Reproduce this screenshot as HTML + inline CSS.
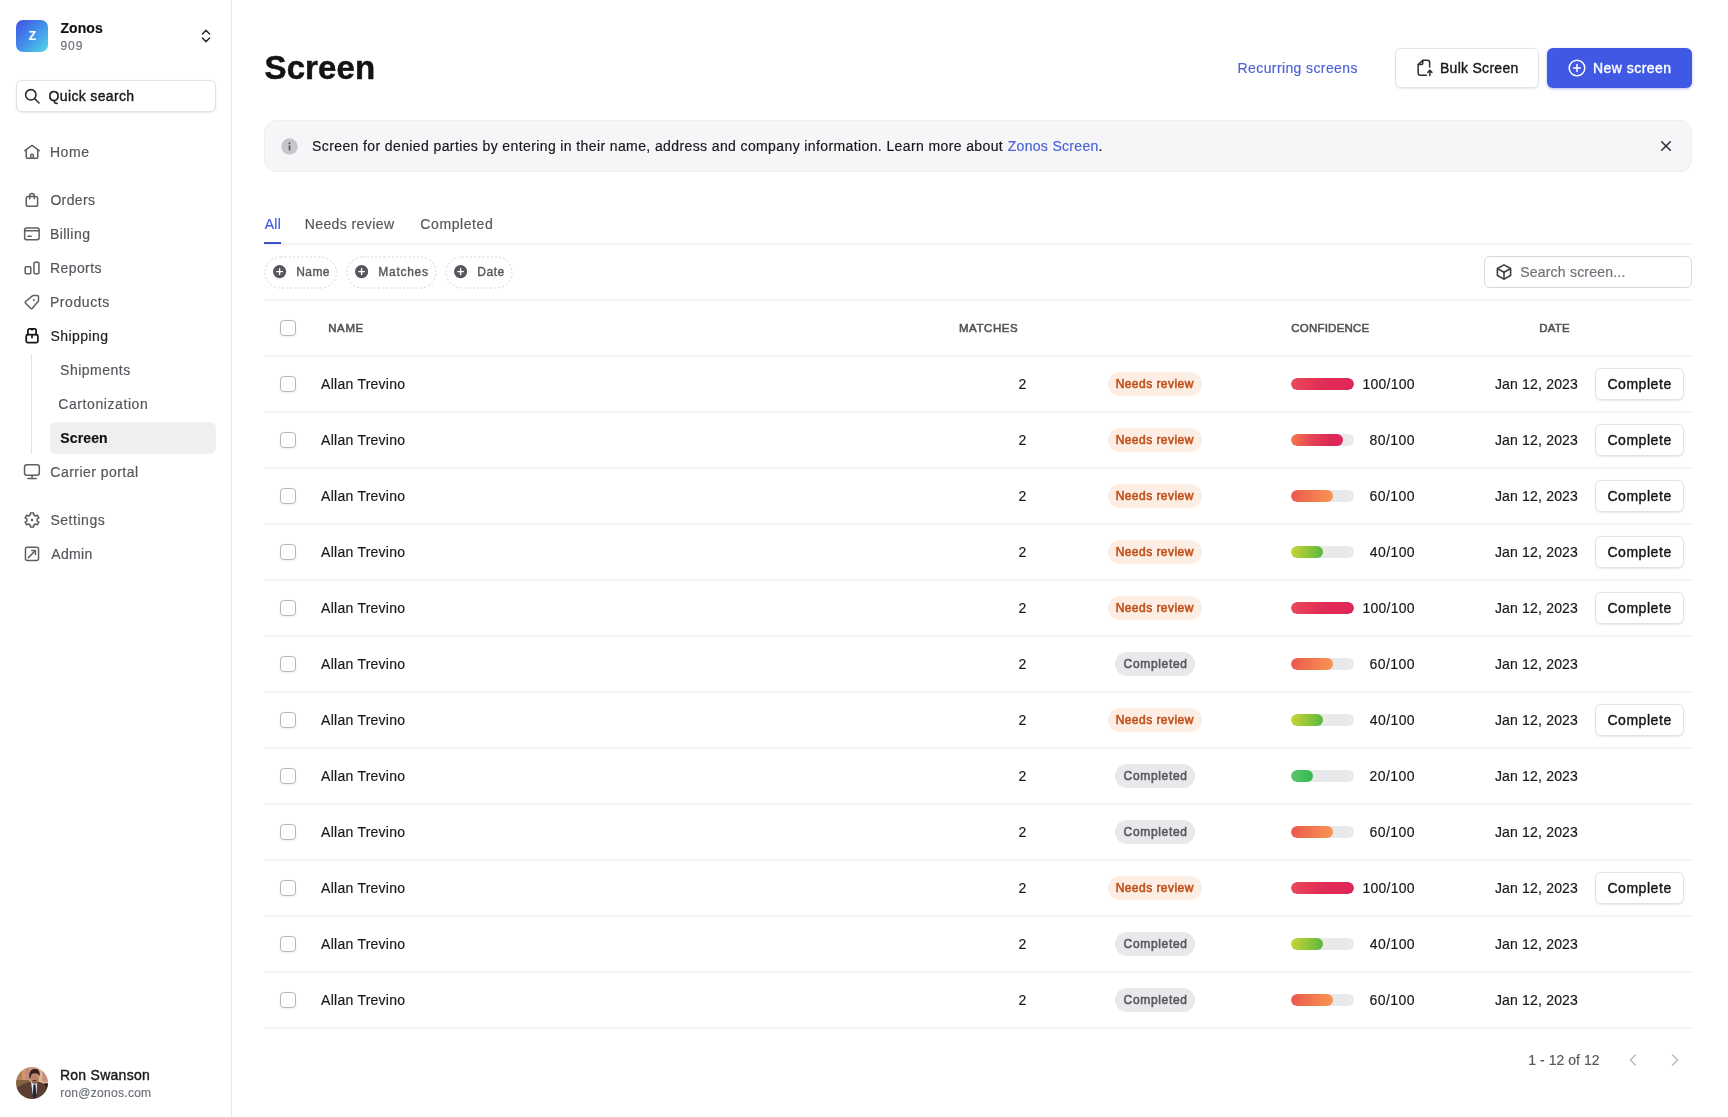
<!DOCTYPE html>
<html lang="en"><head><meta charset="utf-8"><title>Screen</title>
<style>
html,body{margin:0;padding:0;background:#fff}
body{width:1728px;height:1117px;position:relative;overflow:hidden;font-family:"Liberation Sans",sans-serif}
.a{position:absolute;box-sizing:border-box}
.t{position:absolute;white-space:pre;line-height:20px;-webkit-text-stroke:.18px currentColor}
#root{position:absolute;left:0;top:0;width:1728px;height:1117px;will-change:transform}
.m{-webkit-text-stroke:.38px currentColor}
.sb{-webkit-text-stroke:.55px currentColor}
.cb{width:16px;height:16px;border:1.5px solid #b4b6bb;border-radius:4px;background:#fff;box-shadow:0 1px 2px rgba(0,0,0,.08)}
.hl{height:2px;background:#f3f3f5;left:264px;width:1428px}
.btn{background:#fff;border:1px solid #e3e3e6;border-radius:6px;box-shadow:0 1px 2px rgba(0,0,0,.09)}
.badge{height:24px;border-radius:12px}
.track{height:12px;width:63px;border-radius:6px;background:#e9e9ec;overflow:hidden}
.fill{height:12px;border-radius:6px}
.chip{height:32px;border:1px dashed #d6d6da;border-radius:16px}
</style></head><body><div id="root">

<div class="a" style="left:231px;top:0;width:1px;height:1117px;background:#e8e8eb"></div>
<div class="a" style="left:16px;top:20px;width:32px;height:32px;border-radius:7px;background:linear-gradient(135deg,#4250e2 0%,#4190ea 50%,#55d8e8 100%)"></div>
<span class="t" style="left:28.68px;top:25.60px;font-size:12px;font-weight:700;color:#fff;letter-spacing:0.000px">Z</span>
<span class="t" style="left:60.52px;top:18.20px;font-size:14px;font-weight:700;color:#111;letter-spacing:0.053px">Zonos</span>
<span class="t" style="left:60.38px;top:35.80px;font-size:12px;font-weight:400;color:#6d7178;letter-spacing:1.010px">909</span>
<svg class="a" style="color:#2b2d31;overflow:visible;left:198px;top:28px" width="16" height="16" viewBox="0 0 16 16" fill="none" stroke="#2b2d31" stroke-width="1.5" stroke-linecap="round" stroke-linejoin="round" ><path d="M4.400 6 8 2.400 11.600 6"/><path d="M4.400 10 8 13.600 11.600 10"/></svg>
<div class="a btn" style="left:16px;top:80px;width:200px;height:32px;border-radius:6px"></div>
<svg class="a" style="color:#2b2d31;overflow:visible;left:24px;top:88px" width="16" height="16" viewBox="0 0 16 16" fill="none" stroke="#2b2d31" stroke-width="1.6" stroke-linecap="round" stroke-linejoin="round" ><circle cx="6.800" cy="6.800" r="5.200"/><path d="M10.800 10.800 15 15"/></svg>
<span class="t m" style="left:48.58px;top:86.00px;font-size:14px;font-weight:400;color:#17181b;letter-spacing:0.344px">Quick search</span>
<svg class="a" style="color:#5c5f64;overflow:visible;left:24px;top:144px" width="16" height="16" viewBox="0 0 16 16" fill="none" stroke="#5c5f64" stroke-width="1.5" stroke-linecap="round" stroke-linejoin="round" ><path d="M0.900 6.700 8.050 1.450 15.200 6.700"/><path d="M2.250 5.900v7c0 .800.650 1.450 1.450 1.450h8.600c.800 0 1.450-.650 1.450-1.450v-7"/><path d="M6.750 14.300v-3.100c0-.500.400-.900.900-.900h.750c.500 0 .900.400.900.900v3.100"/></svg>
<span class="t" style="left:49.89px;top:142.00px;font-size:14px;font-weight:400;color:#53565b;letter-spacing:0.610px">Home</span>
<svg class="a" style="color:#5c5f64;overflow:visible;left:24px;top:192px" width="16" height="16" viewBox="0 0 16 16" fill="none" stroke="#5c5f64" stroke-width="1.5" stroke-linecap="round" stroke-linejoin="round" ><rect x="2.250" y="4.550" width="11.350" height="9.750" rx="1.900"/><path d="M5.650 6.700V3.800c0-1.300 1-2.300 2.300-2.300s2.350 1 2.350 2.300v2.900"/></svg>
<span class="t" style="left:50.38px;top:190.00px;font-size:14px;font-weight:400;color:#53565b;letter-spacing:0.358px">Orders</span>
<svg class="a" style="color:#5c5f64;overflow:visible;left:24px;top:226px" width="16" height="16" viewBox="0 0 16 16" fill="none" stroke="#5c5f64" stroke-width="1.5" stroke-linecap="round" stroke-linejoin="round" ><rect x=".650" y="2.050" width="14.500" height="11.700" rx="1.900"/><path d="M.650 4.800h14.500"/><path d="M3.900 10.300h3.300"/></svg>
<span class="t" style="left:49.89px;top:224.00px;font-size:14px;font-weight:400;color:#53565b;letter-spacing:0.452px">Billing</span>
<svg class="a" style="color:#5c5f64;overflow:visible;left:24px;top:260px" width="16" height="16" viewBox="0 0 16 16" fill="none" stroke="#5c5f64" stroke-width="1.5" stroke-linecap="round" stroke-linejoin="round" ><rect x="1.150" y="6.750" width="5.600" height="6.900" rx="1.100"/><rect x="9.950" y="2.250" width="5" height="11.400" rx="1.100"/></svg>
<span class="t" style="left:49.89px;top:258.00px;font-size:14px;font-weight:400;color:#53565b;letter-spacing:0.441px">Reports</span>
<svg class="a" style="color:#5c5f64;overflow:visible;left:24px;top:294px" width="16" height="16" viewBox="0 0 16 16" fill="none" stroke="#5c5f64" stroke-width="1.5" stroke-linecap="round" stroke-linejoin="round" ><path d="M9.800 1.400H13.100Q14.500 1.400 14.500 2.800V6.300Q14.500 7 14 7.600L8.400 14.300Q7.500 15.200 6.600 14.300L1.600 9.300Q.700 8.400 1.600 7.500L8.400 1.900Q9 1.400 9.800 1.400Z"/><circle cx="9.900" cy="6" r="1" fill="currentColor" stroke="none"/></svg>
<span class="t" style="left:49.89px;top:292.00px;font-size:14px;font-weight:400;color:#53565b;letter-spacing:0.589px">Products</span>
<svg class="a" style="color:#17181b;overflow:visible;left:24px;top:328px" width="16" height="16" viewBox="0 0 16 16" fill="none" stroke="#17181b" stroke-width="1.75" stroke-linecap="round" stroke-linejoin="round" ><rect x="2.200" y="6.700" width="11.700" height="7.900" rx="1.500"/><path d="M3.900 6.700V2.300c0-.800.600-1.400 1.400-1.400h5.400c.800 0 1.400.600 1.400 1.400v4.400"/><path d="M8 6.900v2.600"/><path d="M7.200 1.300 8 2.500l.800-1.200Z" fill="currentColor" stroke-width="1"/></svg>
<span class="t" style="left:50.40px;top:326.00px;font-size:14px;font-weight:400;color:#1d1e22;letter-spacing:0.437px">Shipping</span>
<svg class="a" style="color:#5c5f64;overflow:visible;left:24px;top:464px" width="16" height="16" viewBox="0 0 16 16" fill="none" stroke="#5c5f64" stroke-width="1.5" stroke-linecap="round" stroke-linejoin="round" ><rect x=".550" y=".850" width="14.750" height="10.300" rx="2.200"/><path d="M8.040 11.300v3.200"/><path d="M3.900 14.550h8.200"/></svg>
<span class="t" style="left:50.33px;top:462.00px;font-size:14px;font-weight:400;color:#53565b;letter-spacing:0.466px">Carrier portal</span>
<svg class="a" style="color:#5c5f64;overflow:visible;left:24px;top:512px" width="16" height="16" viewBox="0 0 16 16" fill="none" stroke="#5c5f64" stroke-width="1.5" stroke-linecap="round" stroke-linejoin="round" ><path d="M6.27 2.99 L6.32 1.00 L9.68 1.00 L9.73 2.99 L11.48 4.00 L13.22 3.04 L14.90 5.96 L13.20 6.99 L13.20 9.01 L14.90 10.04 L13.22 12.96 L11.48 12.00 L9.73 13.01 L9.68 15.00 L6.32 15.00 L6.27 13.01 L4.52 12.00 L2.78 12.96 L1.10 10.04 L2.80 9.01 L2.80 6.99 L1.10 5.96 L2.78 3.04 L4.52 4.00Z"/><circle cx="8" cy="8" r="1.250" fill="currentColor" stroke="none"/></svg>
<span class="t" style="left:50.40px;top:510.00px;font-size:14px;font-weight:400;color:#53565b;letter-spacing:0.538px">Settings</span>
<svg class="a" style="color:#5c5f64;overflow:visible;left:24px;top:546px" width="16" height="16" viewBox="0 0 16 16" fill="none" stroke="#5c5f64" stroke-width="1.5" stroke-linecap="round" stroke-linejoin="round" ><rect x="1.450" y="1.200" width="13.100" height="13.400" rx="2"/><path d="M4.400 11.600l6.800-6.800"/><path d="M7.800 4.600h3.600v3.900"/></svg>
<span class="t" style="left:51.31px;top:544.00px;font-size:14px;font-weight:400;color:#53565b;letter-spacing:0.317px">Admin</span>
<div class="a" style="left:31px;top:354px;width:1px;height:100px;background:#e4e4e7"></div>
<div class="a" style="left:50px;top:422px;width:166px;height:32px;border-radius:6px;background:#efeff0"></div>
<span class="t" style="left:60.10px;top:360.00px;font-size:14px;font-weight:400;color:#53565b;letter-spacing:0.488px">Shipments</span>
<span class="t" style="left:58.23px;top:394.00px;font-size:14px;font-weight:400;color:#53565b;letter-spacing:0.587px">Cartonization</span>
<span class="t" style="left:60.34px;top:428.00px;font-size:14px;font-weight:700;color:#111;letter-spacing:0.118px">Screen</span>
<svg class="a" style="left:16px;top:1067px" width="32" height="32" viewBox="0 0 32 32"><defs><clipPath id="av"><circle cx="16" cy="16" r="16"/></clipPath><filter id="bl" x="-10%" y="-10%" width="120%" height="120%"><feGaussianBlur stdDeviation=".55"/></filter></defs>
<g clip-path="url(#av)"><g filter="url(#bl)"><rect x="-2" y="-2" width="36" height="36" fill="#c89c7c"/><rect x="-2" y="-2" width="8" height="36" fill="#b47f5c"/><rect x="6" y="-2" width="3.500" height="20" fill="#d19a62"/><rect x="9.500" y="-2" width="4" height="20" fill="#c48a82"/><rect x="23" y="-2" width="3.500" height="20" fill="#dcb692"/><rect x="26.500" y="-2" width="7" height="20" fill="#c88c80"/>
<path d="M-2 13h15v8l-15 3Z" fill="#86643f"/><rect x="24" y="14.800" width="9" height="1.600" fill="#dcbc92"/><rect x="28" y="16.400" width="5" height="10" fill="#2e1e18"/>
<path d="M-2 23C3 18.500 9 16.500 14 14.800l9.500.200c3.500 1 5.500 2.500 6.500 5l3 14H-2Z" fill="#5c3e30"/>
<path d="M15 14.500h6.200L20.600 27h-4Z" fill="#e9e6ea"/><path d="M17.400 17.600h2.100l1 11.500-1.900 2.500-1.900-2.500Z" fill="#1b2940"/>
<ellipse cx="18.700" cy="11.300" rx="3.900" ry="5.400" fill="#b9846a"/>
<path d="M13.600 11.500c-1.200-6 1.400-9.800 5.200-9.800 3.600 0 5.600 2.800 4.900 7.600-.900-2.200-2.400-3.100-4.900-3.100-2.600 0-3.700 1.200-3.900 3.400-.100 1.200-.400 1.900-1.300 1.900Z" fill="#38231a"/>
<path d="M16.300 13.600c1.400-.900 3.200-.900 4.500 0l-.200 1c-1.300-.400-2.800-.400-4.100 0Z" fill="#452c20"/><path d="M15.300 13.500c.600 2.300 1.800 3.300 3.400 3.300s2.800-1 3.400-3.300c-.800 1.500-1.900 2.100-3.400 2.100s-2.600-.600-3.400-2.100Z" fill="#6b4a3a"/></g></g></svg>
<span class="t m" style="left:59.89px;top:1065.00px;font-size:14px;font-weight:400;color:#17181b;letter-spacing:0.271px">Ron Swanson</span>
<span class="t" style="left:60.14px;top:1082.80px;font-size:12px;font-weight:400;color:#6d7178;letter-spacing:0.287px">ron@zonos.com</span>
<span class="t" style="left:264.55px;top:58.30px;font-size:33px;font-weight:700;color:#131316;letter-spacing:0.104px;-webkit-text-stroke:0.5px currentColor">Screen</span>
<span class="t" style="left:1237.59px;top:58.00px;font-size:14px;font-weight:400;color:#4a63d6;letter-spacing:0.392px">Recurring screens</span>
<div class="a btn" style="left:1394.500px;top:48px;width:144px;height:40px"></div>
<svg class="a" style="color:#2b2d31;overflow:visible;left:1415px;top:59px" width="18" height="18" viewBox="0 0 18 18" fill="none" stroke="#2b2d31" stroke-width="1.5" stroke-linecap="round" stroke-linejoin="round" ><path d="M14.650 8V3.600a2.250 2.250 0 0 0-2.250-2.250H7.800L3.150 5.600v8.500a2.250 2.250 0 0 0 2.250 2.250h6"/><path d="M7.800 1.600v2.400a1.600 1.600 0 0 1-1.600 1.600H3.400"/><path d="M14.900 16.400v-4.800"/><path d="M12.900 13.400l2-2 2 2"/></svg>
<span class="t m" style="left:1439.99px;top:58.00px;font-size:14px;font-weight:400;color:#17181b;letter-spacing:0.279px">Bulk Screen</span>
<div class="a" style="left:1547px;top:48px;width:145px;height:40px;border-radius:6px;background:#4059e5;box-shadow:0 1px 3px rgba(40,60,180,.35)"></div>
<svg class="a" style="color:#fff;overflow:visible;left:1568px;top:59px" width="18" height="18" viewBox="0 0 18 18" fill="none" stroke="#fff" stroke-width="1.5" stroke-linecap="round" stroke-linejoin="round" ><circle cx="9" cy="9" r="7.800"/><path d="M9 5.600v6.800M5.600 9h6.800"/></svg>
<span class="t m" style="left:1592.99px;top:58.00px;font-size:14px;font-weight:400;color:#fff;letter-spacing:0.473px">New screen</span>
<div class="a" style="left:264px;top:120px;width:1428px;height:52px;border-radius:12px;background:#f6f6f8;border:1px solid #eeeef1"></div>
<svg class="a" style="left:281px;top:138px" width="17" height="17" viewBox="0 0 17 17"><circle cx="8.500" cy="8.500" r="8.200" fill="#c5c6ca"/><circle cx="8.500" cy="5.300" r=".950" fill="#4b4e54"/><rect x="7.700" y="7.300" width="1.600" height="5" rx=".400" fill="#4b4e54"/></svg>
<span class="t" style="left:312.10px;top:136.00px;font-size:14px;font-weight:400;color:#17181b;letter-spacing:0.389px">Screen for denied parties by entering in their name, address and company information. Learn more about</span>
<span class="t" style="left:1007.70px;top:136.00px;font-size:14px;font-weight:400;color:#4a63d6;letter-spacing:0.318px">Zonos Screen</span>
<span class="t" style="left:1098.56px;top:136.00px;font-size:14px;font-weight:400;color:#17181b;letter-spacing:0.000px">.</span>
<svg class="a" style="color:#2b2d31;overflow:visible;left:1658px;top:138px" width="16" height="16" viewBox="0 0 16 16" fill="none" stroke="#2b2d31" stroke-width="1.5" stroke-linecap="round" stroke-linejoin="round" ><path d="M3.700 3.700l8.600 8.600M12.300 3.700 3.700 12.300"/></svg>
<span class="t" style="left:264.71px;top:213.70px;font-size:14px;font-weight:400;color:#4059e0;letter-spacing:0.311px">All</span>
<span class="t" style="left:304.69px;top:213.70px;font-size:14px;font-weight:400;color:#53565b;letter-spacing:0.410px">Needs review</span>
<span class="t" style="left:420.33px;top:213.70px;font-size:14px;font-weight:400;color:#53565b;letter-spacing:0.591px">Completed</span>
<div class="a hl" style="top:243px"></div>
<div class="a" style="left:264px;top:242px;width:17px;height:2px;background:#3d50cc"></div>
<svg class="a" style="left:264.0px;top:255.5px" width="73.5" height="33" fill="none"><rect x="1" y="1" width="71.5" height="31" rx="15.500" stroke="#d4d4d9" stroke-width="1" stroke-dasharray="2 2.200"/></svg>
<svg class="a" style="left:273.4px;top:265.4px" width="13.200" height="13.200" viewBox="0 0 14 14"><circle cx="7" cy="7" r="7" fill="#55585e"/><path d="M7 4v6M4 7h6" stroke="#fff" stroke-width="1.500" stroke-linecap="round"/></svg>
<span class="t m" style="left:296.36px;top:262.00px;font-size:12px;font-weight:400;color:#55585e;letter-spacing:0.341px">Name</span>
<svg class="a" style="left:346.0px;top:255.5px" width="91.0" height="33" fill="none"><rect x="1" y="1" width="89.0" height="31" rx="15.500" stroke="#d4d4d9" stroke-width="1" stroke-dasharray="2 2.200"/></svg>
<svg class="a" style="left:355.3px;top:265.4px" width="13.200" height="13.200" viewBox="0 0 14 14"><circle cx="7" cy="7" r="7" fill="#55585e"/><path d="M7 4v6M4 7h6" stroke="#fff" stroke-width="1.500" stroke-linecap="round"/></svg>
<span class="t m" style="left:378.26px;top:262.00px;font-size:12px;font-weight:400;color:#55585e;letter-spacing:0.730px">Matches</span>
<svg class="a" style="left:445.0px;top:255.5px" width="68.0" height="33" fill="none"><rect x="1" y="1" width="66.0" height="31" rx="15.500" stroke="#d4d4d9" stroke-width="1" stroke-dasharray="2 2.200"/></svg>
<svg class="a" style="left:454.3px;top:265.4px" width="13.200" height="13.200" viewBox="0 0 14 14"><circle cx="7" cy="7" r="7" fill="#55585e"/><path d="M7 4v6M4 7h6" stroke="#fff" stroke-width="1.500" stroke-linecap="round"/></svg>
<span class="t m" style="left:477.36px;top:262.00px;font-size:12px;font-weight:400;color:#55585e;letter-spacing:0.493px">Date</span>
<div class="a" style="left:1484px;top:256px;width:208px;height:32px;border-radius:6px;border:1px solid #d8d8dc;background:#fff"></div>
<svg class="a" style="color:#3d3f44;overflow:visible;left:1496px;top:264px" width="16" height="16" viewBox="0 0 16 16" fill="none" stroke="#3d3f44" stroke-width="1.6" stroke-linecap="round" stroke-linejoin="round" ><path d="M8 .900 14.600 4.500v7L8 15.100 1.400 11.500v-7Z"/><path d="M1.700 4.700 8 8.200l6.300-3.500"/><path d="M8 8.200v6.800"/></svg>
<span class="t" style="left:1520.20px;top:262.00px;font-size:14px;font-weight:400;color:#6d7178;letter-spacing:0.213px">Search screen...</span>
<div class="a hl" style="top:299px"></div>
<div class="a cb" style="left:280px;top:320px"></div>
<span class="t sb" style="left:328.18px;top:317.70px;font-size:11.5px;font-weight:400;color:#505358;letter-spacing:0.618px">NAME</span>
<span class="t sb" style="left:958.98px;top:317.70px;font-size:11.5px;font-weight:400;color:#505358;letter-spacing:0.574px">MATCHES</span>
<span class="t sb" style="left:1291.24px;top:317.70px;font-size:11.5px;font-weight:400;color:#505358;letter-spacing:0.222px">CONFIDENCE</span>
<span class="t sb" style="left:1539.18px;top:317.70px;font-size:11.5px;font-weight:400;color:#505358;letter-spacing:0.220px">DATE</span>
<div class="a hl" style="top:355px"></div>
<div class="a cb" style="left:280px;top:376px"></div>
<span class="t" style="left:321.11px;top:374.00px;font-size:14px;font-weight:400;color:#17181b;letter-spacing:0.250px">Allan Trevino</span>
<span class="t" style="left:1018.54px;top:374.00px;font-size:14px;font-weight:400;color:#17181b;letter-spacing:0.000px">2</span>
<div class="a badge" style="left:1108px;top:372px;width:94.300px;background:#fdeee3"></div>
<span class="t sb" style="left:1115.64px;top:374.00px;font-size:12px;font-weight:400;color:#c04f1c;letter-spacing:0.455px">Needs review</span>
<div class="a track" style="left:1291px;top:378px"><div class="fill" style="width:63px;background:linear-gradient(100deg,#e94a58 0%,#e02a57 55%,#df2757 100%)"></div></div>
<span class="t" style="left:1362.47px;top:374.00px;font-size:14px;font-weight:400;color:#17181b;letter-spacing:0.254px">100/100</span>
<span class="t" style="left:1494.92px;top:374.00px;font-size:14px;font-weight:400;color:#17181b;letter-spacing:0.180px">Jan 12, 2023</span>
<div class="a btn" style="left:1595px;top:368px;width:88.500px;height:32px;border-radius:6px"></div>
<span class="t m" style="left:1607.43px;top:374.00px;font-size:14px;font-weight:400;color:#131417;letter-spacing:0.547px">Complete</span>
<div class="a hl" style="top:411px"></div>
<div class="a cb" style="left:280px;top:432px"></div>
<span class="t" style="left:321.11px;top:430.00px;font-size:14px;font-weight:400;color:#17181b;letter-spacing:0.250px">Allan Trevino</span>
<span class="t" style="left:1018.54px;top:430.00px;font-size:14px;font-weight:400;color:#17181b;letter-spacing:0.000px">2</span>
<div class="a badge" style="left:1108px;top:428px;width:94.300px;background:#fdeee3"></div>
<span class="t sb" style="left:1115.64px;top:430.00px;font-size:12px;font-weight:400;color:#c04f1c;letter-spacing:0.455px">Needs review</span>
<div class="a track" style="left:1291px;top:434px"><div class="fill" style="width:52.0px;background:linear-gradient(100deg,#f6774d 0%,#e43f56 45%,#de2856 75%,#df2757 100%)"></div></div>
<span class="t" style="left:1369.53px;top:430.00px;font-size:14px;font-weight:400;color:#17181b;letter-spacing:0.449px">80/100</span>
<span class="t" style="left:1494.92px;top:430.00px;font-size:14px;font-weight:400;color:#17181b;letter-spacing:0.180px">Jan 12, 2023</span>
<div class="a btn" style="left:1595px;top:424px;width:88.500px;height:32px;border-radius:6px"></div>
<span class="t m" style="left:1607.43px;top:430.00px;font-size:14px;font-weight:400;color:#131417;letter-spacing:0.547px">Complete</span>
<div class="a hl" style="top:467px"></div>
<div class="a cb" style="left:280px;top:488px"></div>
<span class="t" style="left:321.11px;top:486.00px;font-size:14px;font-weight:400;color:#17181b;letter-spacing:0.250px">Allan Trevino</span>
<span class="t" style="left:1018.54px;top:486.00px;font-size:14px;font-weight:400;color:#17181b;letter-spacing:0.000px">2</span>
<div class="a badge" style="left:1108px;top:484px;width:94.300px;background:#fdeee3"></div>
<span class="t sb" style="left:1115.64px;top:486.00px;font-size:12px;font-weight:400;color:#c04f1c;letter-spacing:0.455px">Needs review</span>
<div class="a track" style="left:1291px;top:490px"><div class="fill" style="width:42.0px;background:linear-gradient(100deg,#ea584e 0%,#f27d4f 60%,#f99853 100%)"></div></div>
<span class="t" style="left:1369.43px;top:486.00px;font-size:14px;font-weight:400;color:#17181b;letter-spacing:0.470px">60/100</span>
<span class="t" style="left:1494.92px;top:486.00px;font-size:14px;font-weight:400;color:#17181b;letter-spacing:0.180px">Jan 12, 2023</span>
<div class="a btn" style="left:1595px;top:480px;width:88.500px;height:32px;border-radius:6px"></div>
<span class="t m" style="left:1607.43px;top:486.00px;font-size:14px;font-weight:400;color:#131417;letter-spacing:0.547px">Complete</span>
<div class="a hl" style="top:523px"></div>
<div class="a cb" style="left:280px;top:544px"></div>
<span class="t" style="left:321.11px;top:542.00px;font-size:14px;font-weight:400;color:#17181b;letter-spacing:0.250px">Allan Trevino</span>
<span class="t" style="left:1018.54px;top:542.00px;font-size:14px;font-weight:400;color:#17181b;letter-spacing:0.000px">2</span>
<div class="a badge" style="left:1108px;top:540px;width:94.300px;background:#fdeee3"></div>
<span class="t sb" style="left:1115.64px;top:542.00px;font-size:12px;font-weight:400;color:#c04f1c;letter-spacing:0.455px">Needs review</span>
<div class="a track" style="left:1291px;top:546px"><div class="fill" style="width:32.0px;background:linear-gradient(100deg,#cfd534 0%,#8cc63a 55%,#57b63f 100%)"></div></div>
<span class="t" style="left:1369.82px;top:542.00px;font-size:14px;font-weight:400;color:#17181b;letter-spacing:0.392px">40/100</span>
<span class="t" style="left:1494.92px;top:542.00px;font-size:14px;font-weight:400;color:#17181b;letter-spacing:0.180px">Jan 12, 2023</span>
<div class="a btn" style="left:1595px;top:536px;width:88.500px;height:32px;border-radius:6px"></div>
<span class="t m" style="left:1607.43px;top:542.00px;font-size:14px;font-weight:400;color:#131417;letter-spacing:0.547px">Complete</span>
<div class="a hl" style="top:579px"></div>
<div class="a cb" style="left:280px;top:600px"></div>
<span class="t" style="left:321.11px;top:598.00px;font-size:14px;font-weight:400;color:#17181b;letter-spacing:0.250px">Allan Trevino</span>
<span class="t" style="left:1018.54px;top:598.00px;font-size:14px;font-weight:400;color:#17181b;letter-spacing:0.000px">2</span>
<div class="a badge" style="left:1108px;top:596px;width:94.300px;background:#fdeee3"></div>
<span class="t sb" style="left:1115.64px;top:598.00px;font-size:12px;font-weight:400;color:#c04f1c;letter-spacing:0.455px">Needs review</span>
<div class="a track" style="left:1291px;top:602px"><div class="fill" style="width:63px;background:linear-gradient(100deg,#e94a58 0%,#e02a57 55%,#df2757 100%)"></div></div>
<span class="t" style="left:1362.47px;top:598.00px;font-size:14px;font-weight:400;color:#17181b;letter-spacing:0.254px">100/100</span>
<span class="t" style="left:1494.92px;top:598.00px;font-size:14px;font-weight:400;color:#17181b;letter-spacing:0.180px">Jan 12, 2023</span>
<div class="a btn" style="left:1595px;top:592px;width:88.500px;height:32px;border-radius:6px"></div>
<span class="t m" style="left:1607.43px;top:598.00px;font-size:14px;font-weight:400;color:#131417;letter-spacing:0.547px">Complete</span>
<div class="a hl" style="top:635px"></div>
<div class="a cb" style="left:280px;top:656px"></div>
<span class="t" style="left:321.11px;top:654.00px;font-size:14px;font-weight:400;color:#17181b;letter-spacing:0.250px">Allan Trevino</span>
<span class="t" style="left:1018.54px;top:654.00px;font-size:14px;font-weight:400;color:#17181b;letter-spacing:0.000px">2</span>
<div class="a badge" style="left:1115px;top:652px;width:80px;background:#e9e9ec"></div>
<span class="t sb" style="left:1123.62px;top:654.00px;font-size:12px;font-weight:400;color:#56595f;letter-spacing:0.663px">Completed</span>
<div class="a track" style="left:1291px;top:658px"><div class="fill" style="width:42.0px;background:linear-gradient(100deg,#ea584e 0%,#f27d4f 60%,#f99853 100%)"></div></div>
<span class="t" style="left:1369.43px;top:654.00px;font-size:14px;font-weight:400;color:#17181b;letter-spacing:0.470px">60/100</span>
<span class="t" style="left:1494.92px;top:654.00px;font-size:14px;font-weight:400;color:#17181b;letter-spacing:0.180px">Jan 12, 2023</span>
<div class="a hl" style="top:691px"></div>
<div class="a cb" style="left:280px;top:712px"></div>
<span class="t" style="left:321.11px;top:710.00px;font-size:14px;font-weight:400;color:#17181b;letter-spacing:0.250px">Allan Trevino</span>
<span class="t" style="left:1018.54px;top:710.00px;font-size:14px;font-weight:400;color:#17181b;letter-spacing:0.000px">2</span>
<div class="a badge" style="left:1108px;top:708px;width:94.300px;background:#fdeee3"></div>
<span class="t sb" style="left:1115.64px;top:710.00px;font-size:12px;font-weight:400;color:#c04f1c;letter-spacing:0.455px">Needs review</span>
<div class="a track" style="left:1291px;top:714px"><div class="fill" style="width:32.0px;background:linear-gradient(100deg,#cfd534 0%,#8cc63a 55%,#57b63f 100%)"></div></div>
<span class="t" style="left:1369.82px;top:710.00px;font-size:14px;font-weight:400;color:#17181b;letter-spacing:0.392px">40/100</span>
<span class="t" style="left:1494.92px;top:710.00px;font-size:14px;font-weight:400;color:#17181b;letter-spacing:0.180px">Jan 12, 2023</span>
<div class="a btn" style="left:1595px;top:704px;width:88.500px;height:32px;border-radius:6px"></div>
<span class="t m" style="left:1607.43px;top:710.00px;font-size:14px;font-weight:400;color:#131417;letter-spacing:0.547px">Complete</span>
<div class="a hl" style="top:747px"></div>
<div class="a cb" style="left:280px;top:768px"></div>
<span class="t" style="left:321.11px;top:766.00px;font-size:14px;font-weight:400;color:#17181b;letter-spacing:0.250px">Allan Trevino</span>
<span class="t" style="left:1018.54px;top:766.00px;font-size:14px;font-weight:400;color:#17181b;letter-spacing:0.000px">2</span>
<div class="a badge" style="left:1115px;top:764px;width:80px;background:#e9e9ec"></div>
<span class="t sb" style="left:1123.62px;top:766.00px;font-size:12px;font-weight:400;color:#56595f;letter-spacing:0.663px">Completed</span>
<div class="a track" style="left:1291px;top:770px"><div class="fill" style="width:22.0px;background:linear-gradient(100deg,#5cc86c 0%,#30b84f 100%)"></div></div>
<span class="t" style="left:1369.44px;top:766.00px;font-size:14px;font-weight:400;color:#17181b;letter-spacing:0.469px">20/100</span>
<span class="t" style="left:1494.92px;top:766.00px;font-size:14px;font-weight:400;color:#17181b;letter-spacing:0.180px">Jan 12, 2023</span>
<div class="a hl" style="top:803px"></div>
<div class="a cb" style="left:280px;top:824px"></div>
<span class="t" style="left:321.11px;top:822.00px;font-size:14px;font-weight:400;color:#17181b;letter-spacing:0.250px">Allan Trevino</span>
<span class="t" style="left:1018.54px;top:822.00px;font-size:14px;font-weight:400;color:#17181b;letter-spacing:0.000px">2</span>
<div class="a badge" style="left:1115px;top:820px;width:80px;background:#e9e9ec"></div>
<span class="t sb" style="left:1123.62px;top:822.00px;font-size:12px;font-weight:400;color:#56595f;letter-spacing:0.663px">Completed</span>
<div class="a track" style="left:1291px;top:826px"><div class="fill" style="width:42.0px;background:linear-gradient(100deg,#ea584e 0%,#f27d4f 60%,#f99853 100%)"></div></div>
<span class="t" style="left:1369.43px;top:822.00px;font-size:14px;font-weight:400;color:#17181b;letter-spacing:0.470px">60/100</span>
<span class="t" style="left:1494.92px;top:822.00px;font-size:14px;font-weight:400;color:#17181b;letter-spacing:0.180px">Jan 12, 2023</span>
<div class="a hl" style="top:859px"></div>
<div class="a cb" style="left:280px;top:880px"></div>
<span class="t" style="left:321.11px;top:878.00px;font-size:14px;font-weight:400;color:#17181b;letter-spacing:0.250px">Allan Trevino</span>
<span class="t" style="left:1018.54px;top:878.00px;font-size:14px;font-weight:400;color:#17181b;letter-spacing:0.000px">2</span>
<div class="a badge" style="left:1108px;top:876px;width:94.300px;background:#fdeee3"></div>
<span class="t sb" style="left:1115.64px;top:878.00px;font-size:12px;font-weight:400;color:#c04f1c;letter-spacing:0.455px">Needs review</span>
<div class="a track" style="left:1291px;top:882px"><div class="fill" style="width:63px;background:linear-gradient(100deg,#e94a58 0%,#e02a57 55%,#df2757 100%)"></div></div>
<span class="t" style="left:1362.47px;top:878.00px;font-size:14px;font-weight:400;color:#17181b;letter-spacing:0.254px">100/100</span>
<span class="t" style="left:1494.92px;top:878.00px;font-size:14px;font-weight:400;color:#17181b;letter-spacing:0.180px">Jan 12, 2023</span>
<div class="a btn" style="left:1595px;top:872px;width:88.500px;height:32px;border-radius:6px"></div>
<span class="t m" style="left:1607.43px;top:878.00px;font-size:14px;font-weight:400;color:#131417;letter-spacing:0.547px">Complete</span>
<div class="a hl" style="top:915px"></div>
<div class="a cb" style="left:280px;top:936px"></div>
<span class="t" style="left:321.11px;top:934.00px;font-size:14px;font-weight:400;color:#17181b;letter-spacing:0.250px">Allan Trevino</span>
<span class="t" style="left:1018.54px;top:934.00px;font-size:14px;font-weight:400;color:#17181b;letter-spacing:0.000px">2</span>
<div class="a badge" style="left:1115px;top:932px;width:80px;background:#e9e9ec"></div>
<span class="t sb" style="left:1123.62px;top:934.00px;font-size:12px;font-weight:400;color:#56595f;letter-spacing:0.663px">Completed</span>
<div class="a track" style="left:1291px;top:938px"><div class="fill" style="width:32.0px;background:linear-gradient(100deg,#cfd534 0%,#8cc63a 55%,#57b63f 100%)"></div></div>
<span class="t" style="left:1369.82px;top:934.00px;font-size:14px;font-weight:400;color:#17181b;letter-spacing:0.392px">40/100</span>
<span class="t" style="left:1494.92px;top:934.00px;font-size:14px;font-weight:400;color:#17181b;letter-spacing:0.180px">Jan 12, 2023</span>
<div class="a hl" style="top:971px"></div>
<div class="a cb" style="left:280px;top:992px"></div>
<span class="t" style="left:321.11px;top:990.00px;font-size:14px;font-weight:400;color:#17181b;letter-spacing:0.250px">Allan Trevino</span>
<span class="t" style="left:1018.54px;top:990.00px;font-size:14px;font-weight:400;color:#17181b;letter-spacing:0.000px">2</span>
<div class="a badge" style="left:1115px;top:988px;width:80px;background:#e9e9ec"></div>
<span class="t sb" style="left:1123.62px;top:990.00px;font-size:12px;font-weight:400;color:#56595f;letter-spacing:0.663px">Completed</span>
<div class="a track" style="left:1291px;top:994px"><div class="fill" style="width:42.0px;background:linear-gradient(100deg,#ea584e 0%,#f27d4f 60%,#f99853 100%)"></div></div>
<span class="t" style="left:1369.43px;top:990.00px;font-size:14px;font-weight:400;color:#17181b;letter-spacing:0.470px">60/100</span>
<span class="t" style="left:1494.92px;top:990.00px;font-size:14px;font-weight:400;color:#17181b;letter-spacing:0.180px">Jan 12, 2023</span>
<div class="a hl" style="top:1027px"></div>
<span class="t" style="left:1528.27px;top:1050.00px;font-size:14px;font-weight:400;color:#55585e;letter-spacing:0.042px">1 - 12 of 12</span>
<svg class="a" style="color:#b9bbc0;overflow:visible;left:1624.7px;top:1052px" width="16" height="16" viewBox="0 0 16 16" fill="none" stroke="#b9bbc0" stroke-width="1.5" stroke-linecap="round" stroke-linejoin="round" ><path d="M10.400 3 5.400 8l5 5"/></svg>
<svg class="a" style="color:#b9bbc0;overflow:visible;left:1666.8px;top:1052px" width="16" height="16" viewBox="0 0 16 16" fill="none" stroke="#b9bbc0" stroke-width="1.5" stroke-linecap="round" stroke-linejoin="round" ><path d="M5.600 3l5 5-5 5"/></svg>
</div></body></html>
